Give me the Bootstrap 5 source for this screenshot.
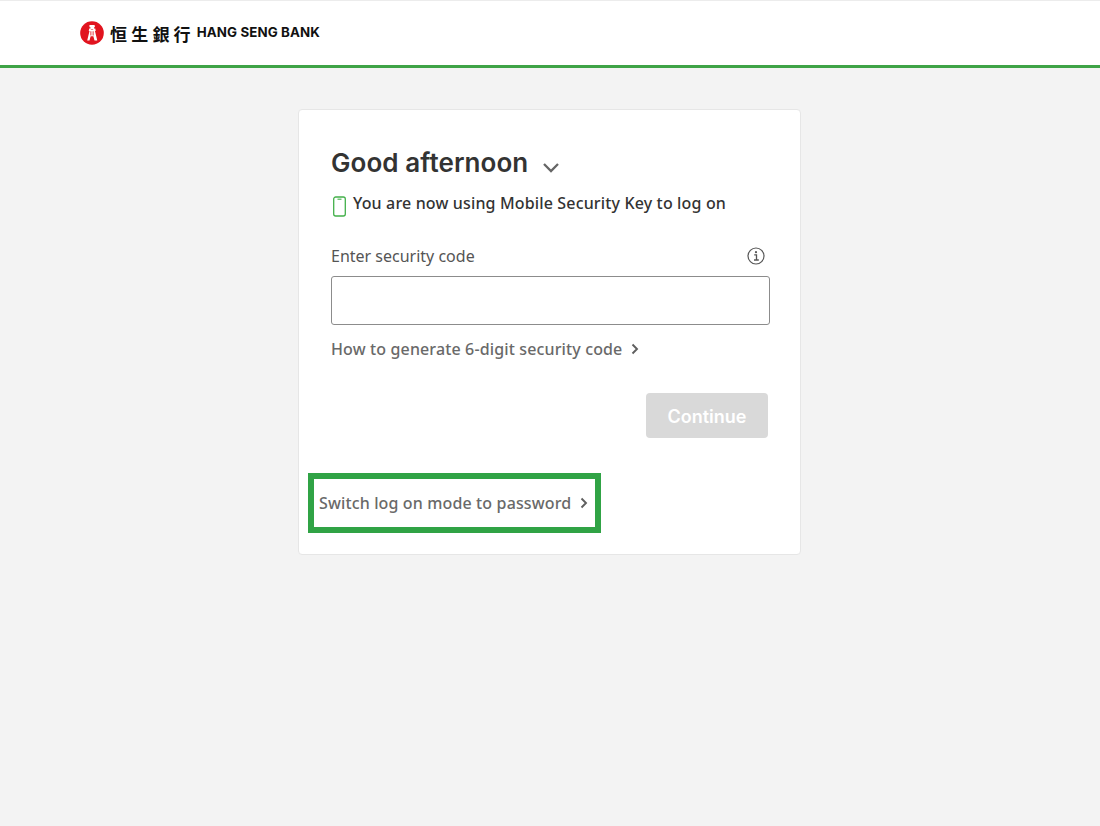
<!DOCTYPE html>
<html lang="en">
<head>
<meta charset="utf-8">
<title>Hang Seng Bank log on</title>
<link href="https://cdn.jsdelivr.net/npm/bootstrap@5.3.0/dist/css/bootstrap.min.css" rel="stylesheet">
<style>
html,body{height:100%}
body{background:#f3f3f3;font-family:"Noto Sans","Open Sans",sans-serif;color:#333}
.top-bar{height:68px;background:#fff;border-top:1px solid #ececec;border-bottom:3px solid #3ea346;padding-left:80px}
.brand-cjk{font-family:"Noto Sans CJK TC",sans-serif;font-size:17px;font-weight:700;letter-spacing:4.200px;color:#111;line-height:1;margin-left:6px;margin-right:2px}
.brand-en{font-family:"Inter","Liberation Sans",sans-serif;font-size:13.300px;font-weight:700;color:#111;line-height:1;letter-spacing:.1px}
.logon-panel{width:503px;height:446px;margin:41px 0 0 298px;background:#fff;border:1px solid #e6e6e6;border-radius:4px;padding:0 32px}
.greet{font-family:"Inter","Liberation Sans",sans-serif;font-size:26px;font-weight:600;color:#333;line-height:32px;margin:0;letter-spacing:.07px}
.greet-row{padding-top:37px;gap:14px}
.mode-line{font-size:16px;font-weight:500;color:#333;line-height:22px;margin-top:13px;gap:7px;letter-spacing:.15px}
.mode-line svg{margin-top:4px;margin-left:1px;margin-right:-1px;flex:none}
.field-row{margin-top:28px;height:22px}
.field-label{font-size:16px;color:#555;line-height:22px;margin:0}
.code-input{height:49px;border:1px solid #8c8c8c;border-radius:3px;margin-top:9px;width:439px;box-shadow:none}
.how-link,.switch-link{font-size:16px;font-weight:500;color:#696969;text-decoration:none;line-height:22px;letter-spacing:.135px}
.how-link{margin-top:13px;gap:9px}
.btn.continue-btn:disabled{width:122px;height:45px;background:#d9d9d9;border:0;border-radius:4px;color:#fff;font-family:"Inter","Liberation Sans",sans-serif;font-size:18px;font-weight:600;opacity:1;padding:2px 0 0}
.btn-row{margin-top:33px}
.switch-box{border:6px solid #30a345;width:293px;height:60px;margin-top:35px;margin-left:-23px;padding-left:5px;gap:9px}
.info-glyph{margin-right:3px}
</style>
</head>
<body>
<header class="top-bar d-flex align-items-center">
  <svg width="24" height="24" viewBox="0 0 25 25" aria-hidden="true">
    <circle cx="12.500" cy="12.500" r="12.300" fill="#e1141f"/>
    <path fill="#fff" d="M9.800 4.200h5.400l.4 2.400h-1v1.300h1.300l.5 2.500h-.8l2.400 9.800h-2.900l-1.200-4.200h-2.800l-1.200 4.200H7.500l2.400-9.800h-.8l.5-2.500h1.300V6.600h-1z"/>
    <path fill="#e1141f" d="M10.900 10.800h.9v4.300h-.9zM13.200 10.800h.9v4.300h-.9zM11.300 8.800h2.400v.7h-2.400z"/>
  </svg>
  <span class="brand-cjk">恒生銀行</span>
  <span class="brand-en">HANG SENG BANK</span>
</header>
<main class="logon-panel">
  <div class="greet-row d-flex align-items-center">
    <h1 class="greet">Good afternoon</h1>
    <svg width="18" height="11" viewBox="0 0 18 11" class="mt-2" aria-hidden="true"><path d="M2 2l7 7 7-7" fill="none" stroke="#666" stroke-width="2.300"/></svg>
  </div>
  <div class="mode-line d-flex align-items-start">
    <svg width="15" height="21" viewBox="0 0 15 21" aria-hidden="true"><rect x="1.700" y="1" width="11.600" height="19" rx="2" fill="none" stroke="#43b04a" stroke-width="1.300"/><path d="M5.500 3.200h4" stroke="#43b04a" stroke-width="1.100"/></svg>
    <span>You are now using Mobile Security Key to log on</span>
  </div>
  <div class="field-row d-flex justify-content-between align-items-center">
    <label class="field-label" for="code">Enter security code</label>
    <svg class="info-glyph" width="18" height="18" viewBox="0 0 18 18" aria-hidden="true"><circle cx="9" cy="9" r="8" fill="none" stroke="#555" stroke-width="1.200"/><circle cx="9" cy="5.200" r="1.100" fill="#555"/><path d="M7.200 7.900H9.500V12.600M7 13h4.800" fill="none" stroke="#555" stroke-width="1.300"/></svg>
  </div>
  <input id="code" class="form-control code-input" type="text">
  <a href="#" class="how-link d-flex align-items-center">How to generate 6-digit security code
    <svg width="8" height="12" viewBox="0 0 8 12" aria-hidden="true"><path d="M1.500 1.500L6 6l-4.500 4.500" fill="none" stroke="#5f5f5f" stroke-width="1.900"/></svg>
  </a>
  <div class="btn-row d-flex justify-content-end">
    <button class="btn continue-btn" type="button" disabled>Continue</button>
  </div>
  <a href="#" class="switch-box switch-link d-flex align-items-center">Switch log on mode to password
    <svg width="8" height="12" viewBox="0 0 8 12" aria-hidden="true"><path d="M1.500 1.500L6 6l-4.500 4.500" fill="none" stroke="#5f5f5f" stroke-width="1.900"/></svg>
  </a>
</main>
<script src="https://cdn.jsdelivr.net/npm/bootstrap@5.3.0/dist/js/bootstrap.bundle.min.js"></script>
</body>
</html>
